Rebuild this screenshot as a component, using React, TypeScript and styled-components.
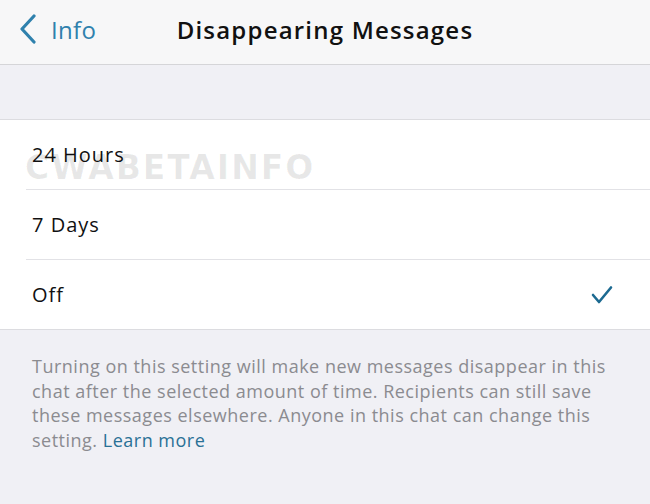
import styled, { createGlobalStyle } from 'styled-components';

const GlobalStyle = createGlobalStyle`
  html, body {
    margin: 0;
    padding: 0;
    background: #f0f0f5;
    font-family: 'Open Sans', 'Liberation Sans', sans-serif;
  }
`;

const Screen = styled.div`
  width: 650px;
  height: 504px;
  background: #f0f0f5;
  overflow: hidden;
`;

const NavBar = styled.header`
  height: 65px;
  box-sizing: border-box;
  padding-bottom: 6px;
  background: #f7f7f8;
  border-bottom: 1px solid #d5d5d8;
  display: grid;
  grid-template-columns: 1fr auto 1fr;
  align-items: center;
`;

const BackButton = styled.div`
  display: flex;
  align-items: center;
  gap: 14px;
  padding-left: 19px;
  color: #2f81ad;
  font-size: 24px;
  letter-spacing: 0.3px;
`;

const Title = styled.h1`
  margin: 0;
  font-size: 24px;
  font-weight: 600;
  color: #111;
  letter-spacing: 1.2px;
`;

const Spacer = styled.div`
  height: 54px;
`;

const List = styled.section`
  position: relative;
  background: #fff;
  border-top: 1px solid #dcdce0;
  border-bottom: 1px solid #dcdce0;
`;

const Row = styled.div<{ $last?: boolean }>`
  height: 69px;
  display: flex;
  align-items: center;
  justify-content: space-between;
  margin-left: 26px;
  padding: 0 37px 0 6px;
  border-bottom: ${({ $last }) => ($last ? 'none' : '1px solid #e2e2e6')};
  font-size: 20px;
  letter-spacing: 1px;
  color: #111;
`;

const Watermark = styled.div`
  position: absolute;
  left: 25px;
  top: 28px;
  font-family: 'DejaVu Sans', sans-serif;
  font-weight: 700;
  font-size: 33px;
  letter-spacing: 2px;
  color: rgba(0, 0, 0, 0.09);
  pointer-events: none;
`;

const Footer = styled.p`
  margin: 0;
  padding: 24px 36px 0 32px;
  font-size: 18px;
  line-height: 24.6px;
  letter-spacing: 0.5px;
  color: #8b8b90;
`;

const Link = styled.span`
  color: #2a7196;
`;

const options = ['24 Hours', '7 Days', 'Off'];
const selected = 'Off';

const App = () => (
  <Screen>
    <GlobalStyle />
    <NavBar>
      <BackButton>
        <svg width="18" height="30" viewBox="0 0 18 30">
          <path d="M15 2 L3 15 L15 28" fill="none" stroke="#2f81ad" strokeWidth="3.2" strokeLinecap="round" strokeLinejoin="round" />
        </svg>
        <span>Info</span>
      </BackButton>
      <Title>Disappearing Messages</Title>
      <div />
    </NavBar>
    <Spacer />
    <List>
      <Watermark>CWABETAINFO</Watermark>
      {options.map((o, i) => (
        <Row key={o} $last={i === options.length - 1}>
          <span>{o}</span>
          {o === selected && (
            <svg width="22" height="20" viewBox="0 0 22 20">
              <path d="M2 10 L8 17 L20 2.5" fill="none" stroke="#1c6a91" strokeWidth="2.6" strokeLinecap="round" strokeLinejoin="round" />
            </svg>
          )}
        </Row>
      ))}
    </List>
    <Footer>
      Turning on this setting will make new messages disappear in this chat after the selected amount of time. Recipients can still save these messages elsewhere. Anyone in this chat can change this setting. <Link>Learn more</Link>
    </Footer>
  </Screen>
);

export default App;
